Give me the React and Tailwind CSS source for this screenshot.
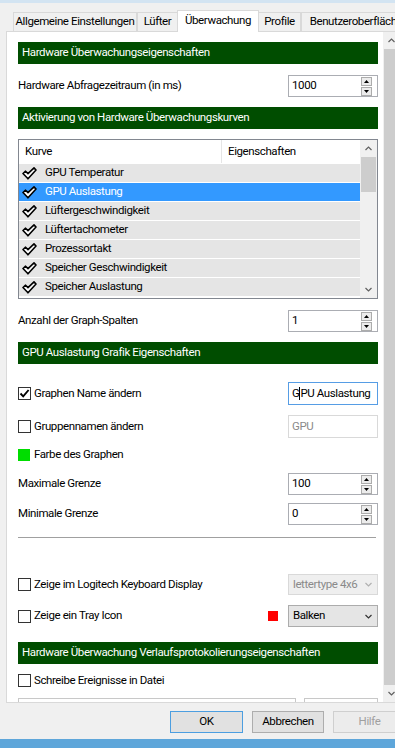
import React from "react";

function Chevron({ dir = "down", color = "#606060" }) {
  return (
    <svg width="7" height="5" viewBox="0 0 7 5">
      <path
        d={dir === "down" ? "M0.5 1 L3.5 4 L6.5 1" : "M0.5 4 L3.5 1 L6.5 4"}
        fill="none"
        stroke={color}
        strokeWidth="1.2"
      />
    </svg>
  );
}

function Header({ children, className = "" }) {
  return (
    <div className={`h-[22px] shrink-0 bg-[#004d00] text-white flex items-center pl-[4px] whitespace-nowrap overflow-hidden ${className}`}>
      {children}
    </div>
  );
}

function SpinBtn({ up }) {
  return (
    <div className="w-[11px] h-[9px] border border-[#acacac] bg-[#ececec] flex items-center justify-center">
      <svg width="5" height="3" viewBox="0 0 5 3">
        <polygon points={up ? "0,3 2.5,0 5,3" : "0,0 2.5,3 5,0"} fill="#000" />
      </svg>
    </div>
  );
}

function Spin({ value }) {
  return (
    <div className="w-[90px] h-[22px] border border-[#abadb3] bg-white flex items-center shrink-0">
      <span className="pl-[3px] flex-1">{value}</span>
      <div className="flex flex-col gap-[1px] mr-[5px]">
        <SpinBtn up />
        <SpinBtn />
      </div>
    </div>
  );
}

function Checkbox({ checked }) {
  return (
    <div className="w-[13px] h-[13px] border border-[#333333] bg-white flex items-center justify-center shrink-0">
      {checked && (
        <svg width="11" height="11" viewBox="0 0 11 11">
          <path d="M1.5 5.5 L4.2 8.3 L9.6 2" fill="none" stroke="#000" strokeWidth="1.9" />
        </svg>
      )}
    </div>
  );
}

function ListCheck() {
  return (
    <svg width="15" height="13" viewBox="0 0 15 13" className="shrink-0">
      <polygon
        points="1,6.5 3.6,4.2 6,6.6 12,0.9 14,3 6,11.8"
        fill="#fff"
        stroke="#000"
        strokeWidth="1.6"
        strokeLinejoin="round"
      />
    </svg>
  );
}

const curves = [
  "GPU Temperatur",
  "GPU Auslastung",
  "Lüftergeschwindigkeit",
  "Lüftertachometer",
  "Prozessortakt",
  "Speicher Geschwindigkeit",
  "Speicher Auslastung",
];

function CurveList() {
  return (
    <div className="mt-[10px] h-[160px] shrink-0 border border-[#828790] bg-white flex">
      <div className="flex-1 flex flex-col overflow-hidden">
        <div className="h-[23px] flex items-center shrink-0">
          <div className="w-[203px] h-full flex items-center pl-[6px] border-r border-[#e5e5e5]">Kurve</div>
          <div className="pl-[6px]">Eigenschaften</div>
        </div>
        {curves.map((c, i) => (
          <div
            key={c}
            className={`h-[19px] shrink-0 border-t border-white flex items-center pl-[3px] ${
              i === 1 ? "bg-[#3399ff] text-white" : "bg-[#e5e5e5]"
            }`}
          >
            <ListCheck />
            <span className="ml-[8px]">{c}</span>
          </div>
        ))}
      </div>
      <div className="w-[17px] bg-[#f0f0f0] flex flex-col shrink-0">
        <div className="h-[17px] flex items-center justify-center">
          <Chevron dir="up" />
        </div>
        <div className="h-[35px] mx-[1px] bg-[#cdcdcd]" />
        <div className="flex-1" />
        <div className="h-[17px] flex items-center justify-center">
          <Chevron dir="down" />
        </div>
      </div>
    </div>
  );
}

function Tab({ children, w, selected }) {
  return (
    <div
      className={`${w} shrink-0 flex items-center justify-center whitespace-nowrap overflow-hidden border-l border-t border-r border-[#d9d9d9] ${
        selected ? "h-[22px] bg-white relative z-10 -mx-[1px] pb-[2px]" : "h-[19px] mb-[1px] bg-[#f0f0f0]"
      }`}
    >
      {children}
    </div>
  );
}

export default function App() {
  return (
    <div className="w-[395px] h-[748px] overflow-hidden bg-[#f0f0f0] flex flex-col font-[Roboto,sans-serif] text-[11.5px] tracking-[-0.4px] text-black">
      <div className="h-[3px] bg-[#d3e4f2] shrink-0" />
      <div className="h-[29px] flex items-end pl-[13px] shrink-0 relative z-10">
        <Tab w="w-[124px]">Allgemeine Einstellungen</Tab>
        <Tab w="w-[41px]">Lüfter</Tab>
        <Tab w="w-[82px]" selected>Überwachung</Tab>
        <Tab w="w-[43px]">Profile</Tab>
        <Tab w="w-[110px]">Benutzeroberfläche</Tab>
      </div>
      <div className="-mt-[1px] ml-[6px] w-[420px] h-[672px] shrink-0 border border-[#d9d9d9] bg-white flex">
        <div className="w-[376px] shrink-0 overflow-hidden pl-[11px] pr-[5px] flex flex-col">
          <Header className="mt-[10px]">Hardware Überwachungseigenschaften</Header>
          <div className="mt-[11px] h-[22px] flex items-center justify-between shrink-0">
            <span>Hardware Abfragezeitraum (in ms)</span>
            <Spin value="1000" />
          </div>
          <Header className="mt-[10px]">Aktivierung von Hardware Überwachungskurven</Header>
          <CurveList />
          <div className="mt-[11px] h-[22px] flex items-center justify-between shrink-0">
            <span>Anzahl der Graph-Spalten</span>
            <Spin value="1" />
          </div>
          <Header className="mt-[10px]">GPU Auslastung Grafik Eigenschaften</Header>
          <div className="mt-[18px] h-[23px] flex items-center shrink-0">
            <Checkbox checked />
            <span className="ml-[3px] flex-1">Graphen Name ändern</span>
            <div className="w-[90px] h-[23px] border border-[#569de5] bg-white flex items-center pl-[3px] whitespace-nowrap overflow-hidden">
              G<span className="inline-block w-[1px] h-[13px] bg-black" />PU Auslastung
            </div>
          </div>
          <div className="mt-[10px] h-[23px] flex items-center shrink-0">
            <Checkbox />
            <span className="ml-[3px] flex-1">Gruppennamen ändern</span>
            <div className="w-[90px] h-[23px] border border-[#d9d9d9] bg-white flex items-center pl-[3px] text-[#8a8a8a]">
              GPU
            </div>
          </div>
          <div className="mt-[11px] h-[12px] flex items-center shrink-0">
            <div className="w-[12px] h-[12px] bg-[#00dd00] shrink-0" />
            <span className="ml-[4px]">Farbe des Graphen</span>
          </div>
          <div className="mt-[12px] h-[22px] flex items-center justify-between shrink-0">
            <span>Maximale Grenze</span>
            <Spin value="100" />
          </div>
          <div className="mt-[8px] h-[22px] flex items-center justify-between shrink-0">
            <span>Minimale Grenze</span>
            <Spin value="0" />
          </div>
          <div className="mt-[12px] h-[1px] w-[358px] bg-[#a0a0a0] shrink-0" />
          <div className="mt-[36px] h-[21px] flex items-center shrink-0">
            <Checkbox />
            <span className="ml-[3px] flex-1">Zeige im Logitech Keyboard Display</span>
            <div className="w-[90px] h-[21px] border border-[#d9d9d9] bg-[#efefef] flex items-center justify-between pl-[4px] pr-[5px] text-[#8a8a8a] whitespace-nowrap">
              <span>lettertype 4x6</span>
              <Chevron color="#b0b0b0" />
            </div>
          </div>
          <div className="mt-[10px] h-[22px] flex items-center shrink-0">
            <Checkbox />
            <span className="ml-[3px] flex-1">Zeige ein Tray Icon</span>
            <div className="w-[10px] h-[10px] bg-[#ff0000] mr-[10px]" />
            <div className="w-[90px] h-[22px] border border-[#acacac] bg-[#e5e5e5] flex items-center justify-between pl-[4px] pr-[5px]">
              <span>Balken</span>
              <Chevron color="#333333" />
            </div>
          </div>
          <Header className="mt-[15px]">Hardware Überwachung Verlaufsprotokolierungseigenschaften</Header>
          <div className="mt-[10px] h-[13px] flex items-center shrink-0">
            <Checkbox />
            <span className="ml-[3px]">Schreibe Ereignisse in Datei</span>
          </div>
          <div className="mt-[11px] h-[20px] flex gap-[8px] shrink-0">
            <div className="w-[278px] border border-[#c8c8c8]" />
            <div className="w-[74px] border border-[#c8c8c8]" />
          </div>
        </div>
        <div className="w-[17px] bg-[#f0f0f0] flex flex-col shrink-0">
          <div className="h-[17px] flex items-center justify-center">
            <Chevron dir="up" />
          </div>
          <div className="flex-1 ml-[1px] mr-[1px] bg-[#cdcdcd]" />
          <div className="h-[17px] flex items-center justify-center">
            <Chevron dir="down" />
          </div>
        </div>
      </div>
      <div className="mt-[8px] h-[22px] flex gap-[9px] pl-[170px] shrink-0">
        <div className="w-[73px] h-[22px] border border-[#4c9ee0] bg-[#e1e1e1] flex items-center justify-center shrink-0">OK</div>
        <div className="w-[72px] h-[22px] border border-[#adadad] bg-[#e1e1e1] flex items-center justify-center shrink-0">Abbrechen</div>
        <div className="w-[73px] h-[22px] border border-[#cfcfcf] bg-[#ececec] flex items-center justify-center text-[#a0a0a0] shrink-0">Hilfe</div>
      </div>
      <div className="h-[6px] shrink-0" />
      <div className="h-[9px] bg-[#5ea6da] shrink-0" />
    </div>
  );
}
